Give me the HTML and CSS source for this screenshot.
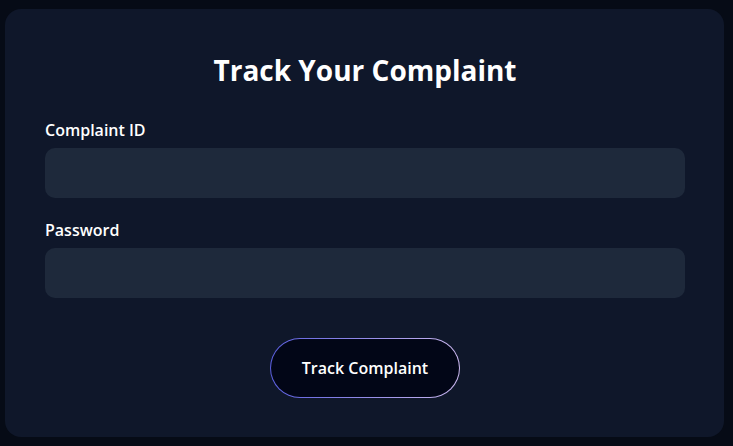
FILE: index.html
```html
<!DOCTYPE html>
<html lang="en">
<head>
<meta charset="utf-8">
<title>Track Your Complaint</title>
<link rel="stylesheet" href="styles.css">
</head>
<body>
  <main class="card">
    <h1 class="title">Track Your Complaint</h1>
    <form class="form">
      <div class="field">
        <label class="label" for="cid">Complaint ID</label>
        <input class="input" id="cid" type="text">
      </div>
      <div class="field">
        <label class="label" for="pwd">Password</label>
        <input class="input" id="pwd" type="password">
      </div>
      <div class="actions">
        <button class="btn" type="button">Track Complaint</button>
      </div>
    </form>
  </main>
</body>
</html>
```

FILE: styles.css
```css
* { box-sizing: border-box; }
html, body { height: 100%; }
body {
  margin: 0;
  background: #060b16;
  font-family: "Open Sans", "Noto Sans", sans-serif;
  color: #ffffff;
  padding: 9px 9px 9px 5px;
}
.card {
  height: 428px;
  background: #0f172a;
  border-radius: 16px;
  padding: 43px 39px 39px 40px;
  display: flex;
  flex-direction: column;
}
.title {
  margin: 0 0 30px;
  text-align: center;
  font-size: 28px;
  line-height: 36px;
  font-weight: 700;
}
.form {
  display: flex;
  flex-direction: column;
  gap: 20px;
}
.field {
  display: flex;
  flex-direction: column;
  gap: 6px;
}
.label {
  font-size: 16px;
  line-height: 24px;
  font-weight: 600;
}
.input {
  height: 50px;
  border: none;
  border-radius: 10px;
  background: #1e293b;
  color: #fff;
  font: inherit;
  padding: 0 14px;
  outline: none;
}
.actions {
  display: flex;
  justify-content: center;
  margin-top: 20px;
}
.btn {
  width: 190px;
  height: 60px;
  border-radius: 30px;
  border: 1px solid transparent;
  background:
    linear-gradient(#020617, #020617) padding-box,
    linear-gradient(90deg, #5b5fe0, #cbb8f0) border-box;
  color: #fff;
  font-family: inherit;
  font-size: 16px;
  font-weight: 600;
  cursor: pointer;
}
```
